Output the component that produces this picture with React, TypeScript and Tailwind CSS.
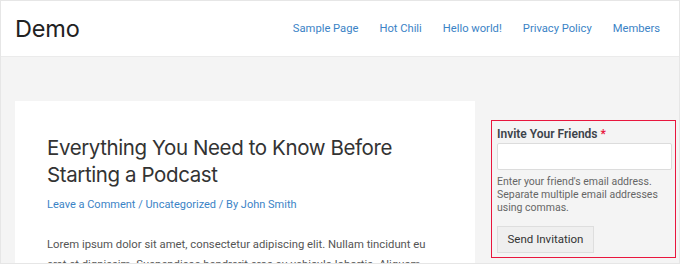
import React from "react";

export default function App() {
  const inter = { fontFamily: 'Inter, "Liberation Sans", Arial, sans-serif' };
  const roboto = { fontFamily: 'Roboto, "Liberation Sans", Arial, sans-serif' };
  return (
    <div
      className="w-[680px] h-[264px] overflow-hidden border border-[#e6e6e6] bg-[#f4f4f4] box-border flex flex-col"
      style={roboto}
    >
      <header className="h-[56px] shrink-0 bg-white border-b border-[#ebebeb] flex items-center justify-between pl-[14px] pr-[19px]">
        <div className="text-[23.5px] text-[#222] tracking-[-0.2px] leading-none mt-[1px]" style={inter}>Demo</div>
        <nav className="flex gap-[21px] text-[11.2px] text-[#3b83c6] mt-[1px]">
          <a>Sample Page</a>
          <a>Hot Chili</a>
          <a>Hello world!</a>
          <a>Privacy Policy</a>
          <a>Members</a>
        </nav>
      </header>
      <div className="flex flex-1 pt-[44px] pl-[14px] gap-[16px] min-h-0">
        <main className="w-[460px] bg-white pl-[32px] pr-[32px] pt-[33px]">
          <h1 className="text-[20.5px] leading-[27px] text-[#333] tracking-[-0.4px]" style={inter}>
            Everything You Need to Know Before Starting a Podcast
          </h1>
          <div className="mt-[9px] text-[11px] leading-[16px] text-[#3b83c6]">
            Leave a Comment / Uncategorized / By John Smith
          </div>
          <p className="mt-[22px] text-[11.3px] leading-[20px] text-[#555]">
            Lorem ipsum dolor sit amet, consectetur adipiscing elit. Nullam tincidunt eu erat et dignissim. Suspendisse hendrerit eros eu vehicula lobortis. Aliquam
          </p>
        </main>
        <aside className="w-[185px] self-start mt-[19px] border border-[#e8163d] px-[5px] pt-[5px] pb-[4px]">
          <label className="block text-[12px] leading-[16px] font-semibold text-[#3c434a]">
            Invite Your Friends <span className="text-[#e8163d]">*</span>
          </label>
          <div className="mt-[1px] h-[27px] w-[175px] bg-white border border-[#dcdcdc] rounded-[2px]" />
          <div className="mt-[5px] text-[10.5px] leading-[13px] text-[#666]">
            Enter your friend's email address. Separate multiple email addresses using commas.
          </div>
          <button className="mt-[12px] h-[27px] w-[97px] bg-[#efefef] border border-[#dedede] text-[11.5px] text-[#333]">
            Send Invitation
          </button>
        </aside>
      </div>
    </div>
  );
}
